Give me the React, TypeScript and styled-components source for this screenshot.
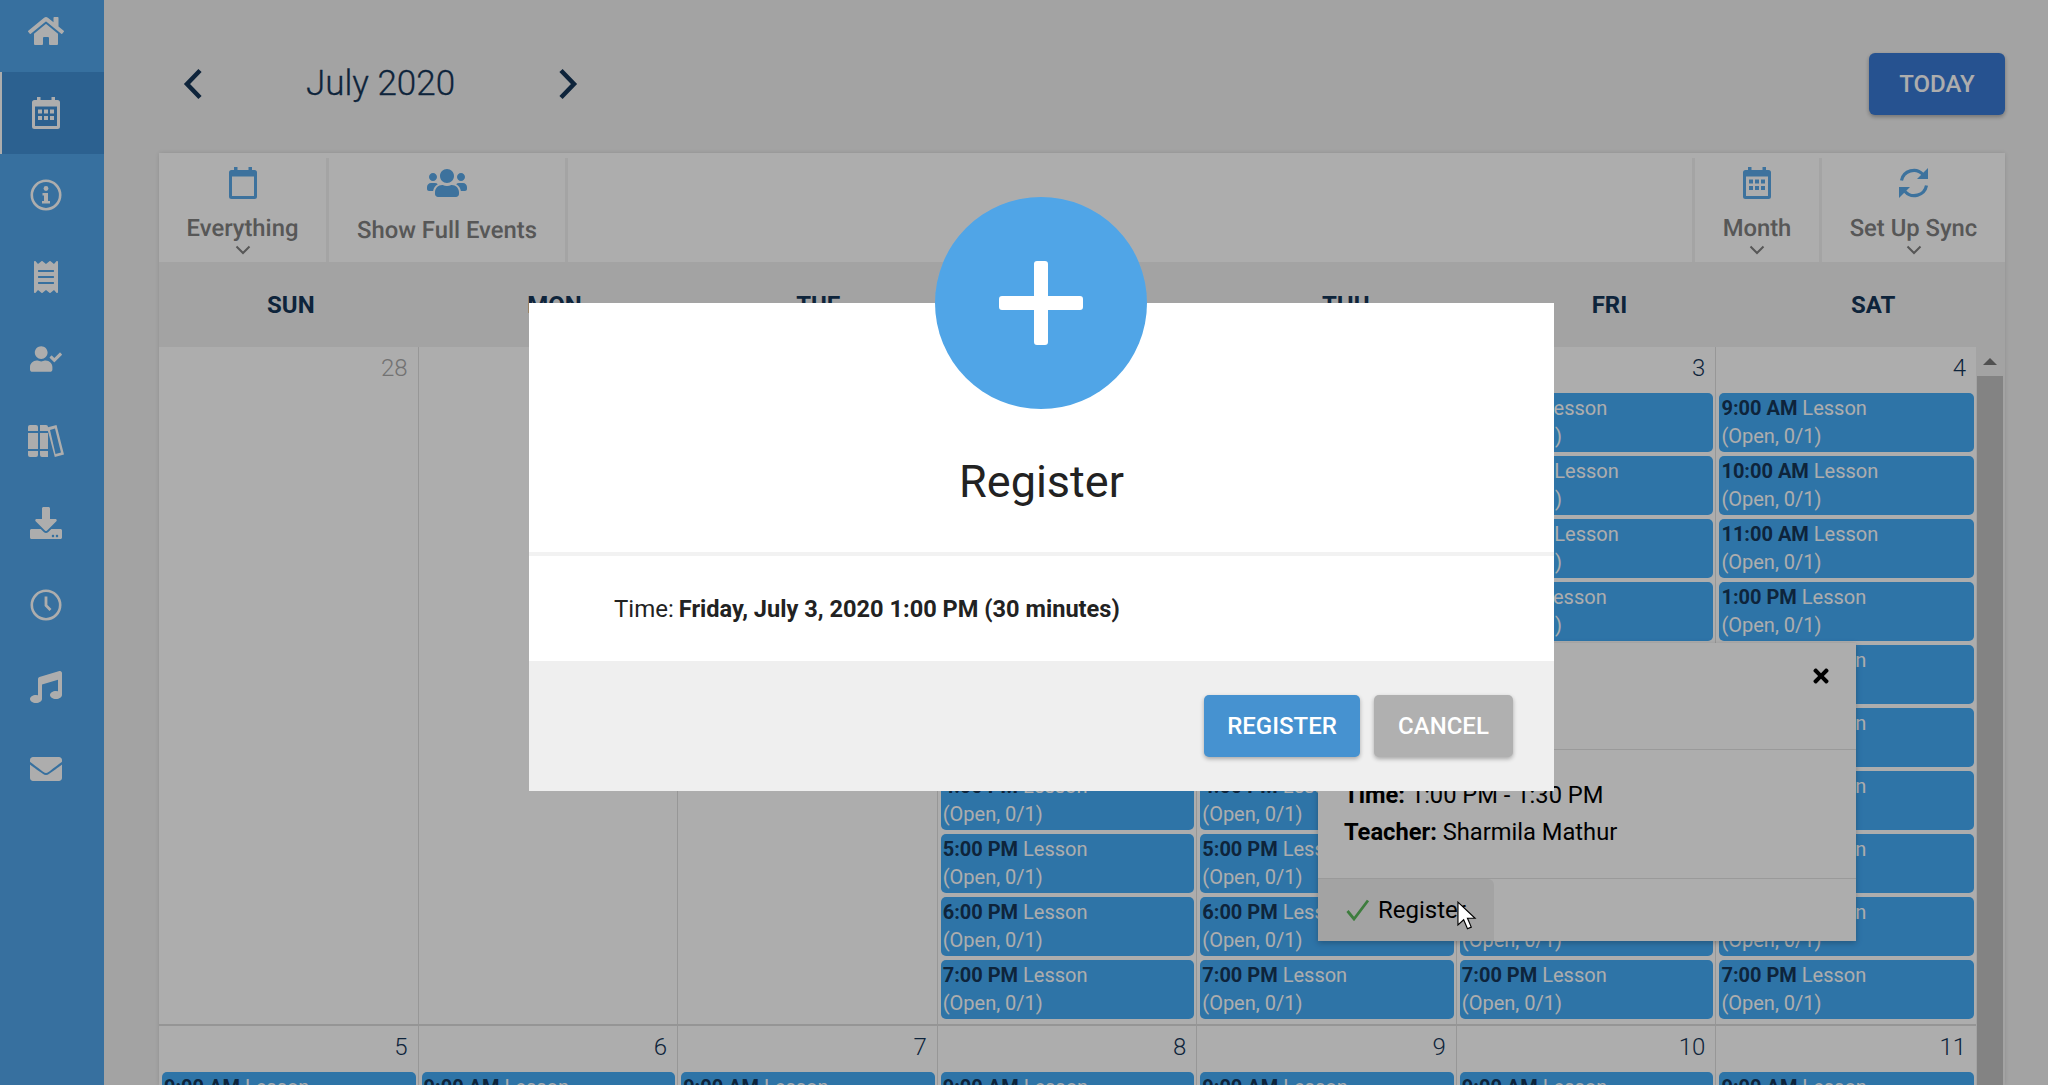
import React from "react";
import styled, { createGlobalStyle } from "styled-components";
import {
  FaHome, FaReceipt, FaUserCheck, FaDownload, FaMusic, FaEnvelope, FaUsers, FaTimes,
} from "react-icons/fa";

const Global = createGlobalStyle`
  html, body { margin: 0; padding: 0; height: 100%; overflow: hidden; }
  body { font-family: Roboto, "Liberation Sans", sans-serif; background: #f1f1f1; }
  * { box-sizing: border-box; }
`;

const Page = styled.div`
  display: flex;
  width: 2048px;
  height: 1085px;
  overflow: hidden;
  background: #f1f1f1;
`;

const Sidebar = styled.nav`
  width: 104px;
  flex: none;
  background: #51a6ea;
  display: flex;
  flex-direction: column;
  margin-top: -10px;
`;

const NavItem = styled.div<{ $active?: boolean }>`
  height: 82px;
  flex: none;
  display: flex;
  align-items: center;
  justify-content: center;
  padding-right: 14px;
  color: #fff;
  font-size: 32px;
  background: ${(p) => (p.$active ? "#428fd4" : "transparent")};
  border-left: 2px solid ${(p) => (p.$active ? "#fff" : "transparent")};
`;

const Main = styled.main`
  flex: 1;
  min-width: 0;
  display: flex;
  flex-direction: column;
  padding: 0 43px 0 55px;
`;

const Header = styled.header`
  height: 153px;
  flex: none;
  display: flex;
  align-items: center;
  padding-top: 15px;
`;

const ArrowButton = styled.div`
  width: 68px;
  flex: none;
  display: flex;
  justify-content: center;
  color: #153658;
`;

const MonthTitle = styled.h1`
  width: 307px;
  margin: 0;
  text-align: center;
  font-size: 35px;
  font-weight: 300;
  line-height: 44px;
  color: #153658;
  -webkit-text-stroke: 0.3px #153658;
`;

const TodayButton = styled.button`
  margin-left: auto;
  width: 136px;
  height: 62px;
  border: 0;
  border-radius: 6px;
  background: #3879d4;
  color: #fff;
  font: 500 24px Roboto, sans-serif;
  box-shadow: 0 2px 4px rgba(0, 0, 0, 0.3);
`;

const Panel = styled.section`
  flex: 1;
  min-height: 0;
  display: flex;
  flex-direction: column;
  box-shadow: 0 0 5px rgba(0, 0, 0, 0.12);
`;

const Toolbar = styled.div`
  height: 109px;
  flex: none;
  display: flex;
  background: #fff;
`;

const ToolItem = styled.div<{ $w: number }>`
  width: ${(p) => p.$w}px;
  flex: none;
  display: flex;
  flex-direction: column;
  align-items: center;
  padding-top: 14px;
  color: #808080;
`;

const ToolIcon = styled.div`
  height: 32px;
  font-size: 32px;
  line-height: 32px;
  color: #5aa9e8;
  display: flex;
  justify-content: center;
  align-items: center;
`;

const ToolLabel = styled.div<{ $low?: boolean }>`
  margin-top: ${(p) => (p.$low ? "16px" : "14px")};
  font-size: 23.800px;
  line-height: 30px;
  font-weight: 500;
  white-space: nowrap;
  text-rendering: geometricPrecision;
`;

const Chevron = styled.div`
  height: 12px;
  margin-top: 2px;
  display: flex;
`;

const ToolSep = styled.div`
  width: 3px;
  flex: none;
  margin-top: 5px;
  background: #f2f2f2;
`;

const ToolSpacer = styled.div`
  flex: 1;
`;

const Weekdays = styled.div`
  height: 85px;
  flex: none;
  display: grid;
  grid-template-columns: repeat(7, 1fr);
  align-items: center;
  background: #f1f1f1;
`;

const Weekday = styled.div`
  text-align: center;
  font-size: 24px;
  font-weight: 700;
  color: #153658;
`;

const Body = styled.div`
  flex: 1;
  min-height: 0;
  display: flex;
  position: relative;
  overflow: hidden;
  background: #fff;
`;

const Weeks = styled.div`
  flex: 1;
  min-width: 0;
  display: flex;
  flex-direction: column;
`;

const Week = styled.div`
  flex: none;
  display: grid;
  grid-template-columns: repeat(7, 1fr);
  border-bottom: 2px solid #dcdcdc;
`;

const Cell = styled.div`
  padding: 0 2px 5px 3px;
  border-right: 1.500px solid #dfdfdf;
  min-width: 0;
  &:last-child { border-right: 0; }
`;

const DateNumber = styled.div<{ $muted?: boolean }>`
  height: 46px;
  padding: 6px 8px 0 0;
  text-align: right;
  font-size: 24px;
  line-height: 30px;
  font-weight: 300;
  color: ${(p) => (p.$muted ? "#a9a9a9" : "#153658")};
`;

const Events = styled.div`
  display: flex;
  flex-direction: column;
  gap: 4px;
`;

const EventCard = styled.div`
  height: 59px;
  padding: 1px 2px;
  border-radius: 5px;
  background: #44abf7;
  color: #fff;
  font-size: 20px;
  line-height: 28px;
  overflow: hidden;
  white-space: nowrap;
`;

const EventTime = styled.strong`
  color: #153658;
  font-weight: 700;
`;

const Scrollbar = styled.div`
  width: 29px;
  flex: none;
  display: flex;
  flex-direction: column;
  align-items: center;
  background: #f1f1f1;
  padding: 0 2px 0 1px;
`;

const ScrollUp = styled.div`
  height: 29px;
  flex: none;
  padding-top: 11px;
  display: flex;
  justify-content: center;
`;

const ScrollThumb = styled.div`
  align-self: stretch;
  flex: 1;
  background: #c1c1c1;
`;

const Popover = styled.div`
  position: absolute;
  left: 1159px;
  top: 296px;
  width: 538px;
  height: 298px;
  background: #fff;
  box-shadow: 0 2px 6px rgba(0, 0, 0, 0.25);
  display: flex;
  flex-direction: column;
`;

const PopHead = styled.div`
  height: 107px;
  flex: none;
  border-bottom: 1.500px solid #e4e4e4;
  display: flex;
  justify-content: flex-end;
  padding: 22px 24px 0 0;
  font-size: 22px;
  color: #000;
`;

const PopBody = styled.div`
  flex: 1;
  padding: 27px 26px 0;
  font-size: 23.700px;
  line-height: 37px;
  color: #000;
`;

const PopFoot = styled.div`
  height: 63px;
  flex: none;
  border-top: 1.500px solid #e4e4e4;
  display: flex;
`;

const PopButton = styled.div`
  width: 176px;
  display: flex;
  align-items: center;
  padding-left: 28px;
  gap: 8px;
  background: #f1f1f1;
  border-radius: 0 6px 0 0;
  font-size: 24px;
  color: #000;
  svg { color: #5cb85c; }
`;

const Overlay = styled.div`
  position: fixed;
  inset: 0;
  background: rgba(0, 0, 0, 0.32);
  display: flex;
  justify-content: center;
  align-items: flex-start;
  padding: 303px 0 0 35px;
`;

const Modal = styled.div`
  width: 1025px;
  height: 488px;
  position: relative;
  background: #fff;
  display: flex;
  flex-direction: column;
`;

const ModalBadge = styled.div`
  position: absolute;
  left: 406px;
  top: -106px;
  width: 212px;
  height: 212px;
  border-radius: 50%;
  background: #50a5e7;
  display: flex;
  align-items: center;
  justify-content: center;
`;

const ModalHead = styled.div`
  flex: none;
  border-bottom: 4px solid #f2f2f2;
  padding-top: 150px;
  box-sizing: content-box;
  height: 99px;
  text-align: center;
`;

const ModalTitle = styled.h2`
  margin: 0;
  font-size: 45px;
  line-height: 58px;
  font-weight: 400;
  color: #222;
`;

const ModalBody = styled.div`
  flex: 1;
  display: flex;
  align-items: center;
  padding-left: 85px;
  font-size: 24px;
  color: #222;
  strong { font-weight: 700; font-size: 23.600px; margin-left: 5px; }
`;

const ModalFoot = styled.div`
  height: 130px;
  flex: none;
  background: #efefef;
  display: flex;
  justify-content: flex-end;
  align-items: flex-start;
  gap: 14px;
  padding: 34px 41px 0 0;
`;

const ModalButton = styled.button<{ $primary?: boolean }>`
  width: ${(p) => (p.$primary ? 156 : 139)}px;
  height: 62px;
  border: 0;
  border-radius: 5px;
  background: ${(p) => (p.$primary ? "#4692d0" : "#b0b0b0")};
  color: #fff;
  font: 500 24px Roboto, sans-serif;
  box-shadow: 0 2px 4px rgba(0, 0, 0, 0.3);
`;

const Pointer = styled.svg`
  position: fixed;
  left: 1457px;
  top: 901px;
`;

const InfoIcon = () => (
  <svg width="32" height="32" viewBox="0 0 32 32">
    <circle cx="16" cy="16" r="14.200" fill="none" stroke="currentColor" strokeWidth="2.600" />
    <circle cx="16" cy="9.500" r="2.400" fill="currentColor" />
    <path d="M12.500 14h5.500v8h2v2.600h-8V22h2v-5.400h-1.500z" fill="currentColor" />
  </svg>
);

const ClockIcon = () => (
  <svg width="32" height="32" viewBox="0 0 32 32" fill="none" stroke="currentColor">
    <circle cx="16" cy="16" r="14.200" strokeWidth="2.600" />
    <path d="M16 7.500v9l4.500 4.500" strokeWidth="2.800" />
  </svg>
);

const BooksIcon = () => (
  <svg width="36" height="32" viewBox="0 0 36 32" fill="currentColor">
    <path d="M2 0h6a2 2 0 0 1 2 2v4H0V2a2 2 0 0 1 2-2zM0 8h10v16H0zM0 26h10v4a2 2 0 0 1-2 2H2a2 2 0 0 1-2-2zM12 0h6a2 2 0 0 1 2 2v4H12V2zM12 8h8v16h-8zM12 26h8v6h-6a2 2 0 0 1-2-2z" />
    <path fillRule="evenodd" d="M19 2.500 28.500 0 36 29.500 26.800 32zM22 5l5.500 24 5.500-1.500L27 3.500z" />
  </svg>
);

const CalendarIcon = ({ grid }: { grid?: boolean }) => (
  <svg width="28" height="32" viewBox="0 0 28 32" fill="currentColor">
    <path
      fillRule="evenodd"
      d="M5 0h3.500v3h11V0H23v3h2.500A2.500 2.500 0 0 1 28 5.500v24a2.500 2.500 0 0 1-2.500 2.500h-23A2.500 2.500 0 0 1 0 29.500v-24A2.500 2.500 0 0 1 2.500 3H5zM3 9.500V29h22V9.500z"
    />
    {grid &&
      [12.500, 19].map((y) =>
        [6, 12, 18].map((x) => <rect key={`${x}-${y}`} x={x} y={y} width="4" height="4" />),
      )}
  </svg>
);

const SyncIcon = () => (
  <svg width="32" height="32" viewBox="0 0 32 32" fill="none">
    <path d="M3.500 13.500A12.500 12.500 0 0 1 25 7.500" stroke="currentColor" strokeWidth="3.200" />
    <path d="M28.500 18.500A12.500 12.500 0 0 1 7 24.500" stroke="currentColor" strokeWidth="3.200" />
    <path d="M30 1v11H19z" fill="currentColor" />
    <path d="M1 31V20h11z" fill="currentColor" />
  </svg>
);

const ChevronLeft = () => (
  <svg width="20" height="32" viewBox="0 0 20 32" fill="none">
    <path d="M17 2.500 4 16l13 13.500" stroke="currentColor" strokeWidth="4.500" />
  </svg>
);

const ChevronRight = () => (
  <svg width="20" height="32" viewBox="0 0 20 32" fill="none">
    <path d="M3 2.500 16 16 3 29.500" stroke="currentColor" strokeWidth="4.500" />
  </svg>
);

const SmallChevron = () => (
  <svg width="16" height="10" viewBox="0 0 16 10" fill="none">
    <path d="M1.500 1.500 8 8l6.500-6.500" stroke="currentColor" strokeWidth="2" />
  </svg>
);

const ThinCheck = () => (
  <svg width="24" height="22" viewBox="0 0 24 22" fill="none">
    <path d="M1.500 12 8 20 22 1.500" stroke="currentColor" strokeWidth="2.800" />
  </svg>
);

const navIcons = [
  <FaHome key="h" size={36} />,
  <CalendarIcon key="c" grid />,
  <InfoIcon key="i" />,
  <FaReceipt key="r" />,
  <FaUserCheck key="u" />,
  <BooksIcon key="b" />,
  <FaDownload key="d" />,
  <ClockIcon key="o" />,
  <FaMusic key="m" />,
  <FaEnvelope key="e" />,
];

const weekdays = ["SUN", "MON", "TUE", "WED", "THU", "FRI", "SAT"];
const times = ["9:00 AM", "10:00 AM", "11:00 AM", "1:00 PM", "2:00 PM", "3:00 PM", "4:00 PM", "5:00 PM", "6:00 PM", "7:00 PM"];

const Event = ({ time }: { time: string }) => (
  <EventCard>
    <EventTime>{time}</EventTime> Lesson
    <br />
    (Open, 0/1)
  </EventCard>
);

const DayCell = ({ n, muted, filled }: { n: number; muted?: boolean; filled?: boolean }) => (
  <Cell>
    <DateNumber $muted={muted}>{n}</DateNumber>
    {filled && (
      <Events>
        {times.map((t) => (
          <Event key={t} time={t} />
        ))}
      </Events>
    )}
  </Cell>
);

export default function App() {
  return (
    <Page>
      <Global />
      <Sidebar>
        {navIcons.map((icon, i) => (
          <NavItem key={i} $active={i === 1}>
            {icon}
          </NavItem>
        ))}
      </Sidebar>
      <Main>
        <Header>
          <ArrowButton>
            <ChevronLeft />
          </ArrowButton>
          <MonthTitle>July 2020</MonthTitle>
          <ArrowButton>
            <ChevronRight />
          </ArrowButton>
          <TodayButton>TODAY</TodayButton>
        </Header>
        <Panel>
          <Toolbar>
            <ToolItem $w={167}>
              <ToolIcon><CalendarIcon /></ToolIcon>
              <ToolLabel>Everything</ToolLabel>
              <Chevron><SmallChevron /></Chevron>
            </ToolItem>
            <ToolSep />
            <ToolItem $w={236}>
              <ToolIcon><FaUsers size={40} /></ToolIcon>
              <ToolLabel $low>Show Full Events</ToolLabel>
            </ToolItem>
            <ToolSep />
            <ToolSpacer />
            <ToolSep />
            <ToolItem $w={124}>
              <ToolIcon><CalendarIcon grid /></ToolIcon>
              <ToolLabel>Month</ToolLabel>
              <Chevron><SmallChevron /></Chevron>
            </ToolItem>
            <ToolSep />
            <ToolItem $w={183}>
              <ToolIcon><SyncIcon /></ToolIcon>
              <ToolLabel>Set Up Sync</ToolLabel>
              <Chevron><SmallChevron /></Chevron>
            </ToolItem>
          </Toolbar>
          <Weekdays>
            {weekdays.map((d) => (
              <Weekday key={d}>{d}</Weekday>
            ))}
          </Weekdays>
          <Body>
            <Weeks>
              <Week>
                <DayCell n={28} muted />
                <DayCell n={29} muted />
                <DayCell n={30} muted />
                <DayCell n={1} filled />
                <DayCell n={2} filled />
                <DayCell n={3} filled />
                <DayCell n={4} filled />
              </Week>
              <Week>
                {[5, 6, 7, 8, 9, 10, 11].map((n) => (
                  <DayCell key={n} n={n} filled />
                ))}
              </Week>
            </Weeks>
            <Scrollbar>
              <ScrollUp>
                <svg width="14" height="7" viewBox="0 0 14 7"><path d="M7 0l7 7H0z" fill="#777" /></svg>
              </ScrollUp>
              <ScrollThumb />
            </Scrollbar>
            <Popover>
              <PopHead><FaTimes /></PopHead>
              <PopBody>
                <div><strong>Time:</strong> 1:00 PM - 1:30 PM</div>
                <div><strong>Teacher:</strong> Sharmila Mathur</div>
              </PopBody>
              <PopFoot>
                <PopButton><ThinCheck />Register</PopButton>
              </PopFoot>
            </Popover>
          </Body>
        </Panel>
      </Main>
      <Overlay>
        <Modal>
          <ModalBadge>
            <svg width="84" height="84" viewBox="0 0 84 84">
              <path d="M35 3a3 3 0 0 1 3-3h8a3 3 0 0 1 3 3v32h32a3 3 0 0 1 3 3v8a3 3 0 0 1-3 3H49v32a3 3 0 0 1-3 3h-8a3 3 0 0 1-3-3V49H3a3 3 0 0 1-3-3v-8a3 3 0 0 1 3-3h32z" fill="#fff" />
            </svg>
          </ModalBadge>
          <ModalHead>
            <ModalTitle>Register</ModalTitle>
          </ModalHead>
          <ModalBody>
            Time: <strong>Friday, July 3, 2020 1:00 PM (30 minutes)</strong>
          </ModalBody>
          <ModalFoot>
            <ModalButton $primary>REGISTER</ModalButton>
            <ModalButton>CANCEL</ModalButton>
          </ModalFoot>
        </Modal>
      </Overlay>
      <Pointer width="20" height="29" viewBox="0 0 21 30">
        <path d="M1 1v24l6-5.500 4 9.500 4-1.800-4-9.300h8z" fill="#fff" stroke="#000" strokeWidth="1.200" />
      </Pointer>
    </Page>
  );
}
